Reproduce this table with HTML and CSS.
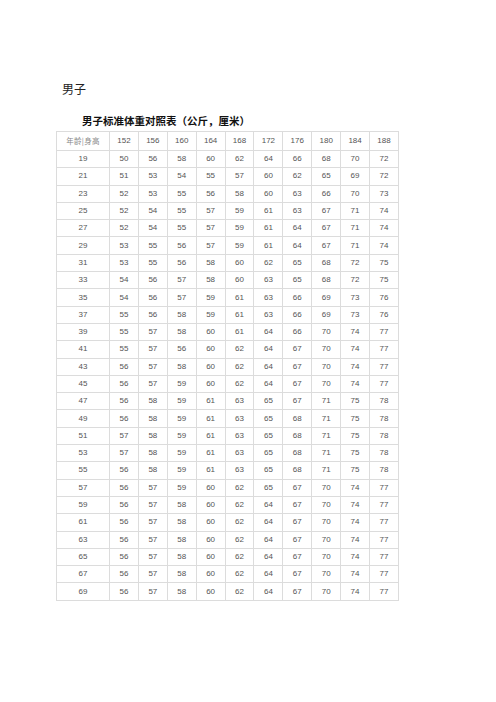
FILE: index.html
```html
<!DOCTYPE html>
<html lang="zh">
<head>
<meta charset="utf-8">
<link rel="stylesheet" href="styles.css">
</head>
<body>
<div class="page">
  <h1 class="heading">男子</h1>
  <h2 class="title">男子标准体重对照表（公斤，厘米）</h2>
  <table class="chart">
    <colgroup><col class="c-first"><col><col><col><col><col><col><col><col><col><col></colgroup>
    <tr class="head"><td class="label">年龄|身高</td><td>152</td><td>156</td><td>160</td><td>164</td><td>168</td><td>172</td><td>176</td><td>180</td><td>184</td><td>188</td></tr>
    <tr><td>19</td><td>50</td><td>56</td><td>58</td><td>60</td><td>62</td><td>64</td><td>66</td><td>68</td><td>70</td><td>72</td></tr>
    <tr><td>21</td><td>51</td><td>53</td><td>54</td><td>55</td><td>57</td><td>60</td><td>62</td><td>65</td><td>69</td><td>72</td></tr>
    <tr><td>23</td><td>52</td><td>53</td><td>55</td><td>56</td><td>58</td><td>60</td><td>63</td><td>66</td><td>70</td><td>73</td></tr>
    <tr><td>25</td><td>52</td><td>54</td><td>55</td><td>57</td><td>59</td><td>61</td><td>63</td><td>67</td><td>71</td><td>74</td></tr>
    <tr><td>27</td><td>52</td><td>54</td><td>55</td><td>57</td><td>59</td><td>61</td><td>64</td><td>67</td><td>71</td><td>74</td></tr>
    <tr><td>29</td><td>53</td><td>55</td><td>56</td><td>57</td><td>59</td><td>61</td><td>64</td><td>67</td><td>71</td><td>74</td></tr>
    <tr><td>31</td><td>53</td><td>55</td><td>56</td><td>58</td><td>60</td><td>62</td><td>65</td><td>68</td><td>72</td><td>75</td></tr>
    <tr><td>33</td><td>54</td><td>56</td><td>57</td><td>58</td><td>60</td><td>63</td><td>65</td><td>68</td><td>72</td><td>75</td></tr>
    <tr><td>35</td><td>54</td><td>56</td><td>57</td><td>59</td><td>61</td><td>63</td><td>66</td><td>69</td><td>73</td><td>76</td></tr>
    <tr><td>37</td><td>55</td><td>56</td><td>58</td><td>59</td><td>61</td><td>63</td><td>66</td><td>69</td><td>73</td><td>76</td></tr>
    <tr><td>39</td><td>55</td><td>57</td><td>58</td><td>60</td><td>61</td><td>64</td><td>66</td><td>70</td><td>74</td><td>77</td></tr>
    <tr><td>41</td><td>55</td><td>57</td><td>56</td><td>60</td><td>62</td><td>64</td><td>67</td><td>70</td><td>74</td><td>77</td></tr>
    <tr><td>43</td><td>56</td><td>57</td><td>58</td><td>60</td><td>62</td><td>64</td><td>67</td><td>70</td><td>74</td><td>77</td></tr>
    <tr><td>45</td><td>56</td><td>57</td><td>59</td><td>60</td><td>62</td><td>64</td><td>67</td><td>70</td><td>74</td><td>77</td></tr>
    <tr><td>47</td><td>56</td><td>58</td><td>59</td><td>61</td><td>63</td><td>65</td><td>67</td><td>71</td><td>75</td><td>78</td></tr>
    <tr><td>49</td><td>56</td><td>58</td><td>59</td><td>61</td><td>63</td><td>65</td><td>68</td><td>71</td><td>75</td><td>78</td></tr>
    <tr><td>51</td><td>57</td><td>58</td><td>59</td><td>61</td><td>63</td><td>65</td><td>68</td><td>71</td><td>75</td><td>78</td></tr>
    <tr><td>53</td><td>57</td><td>58</td><td>59</td><td>61</td><td>63</td><td>65</td><td>68</td><td>71</td><td>75</td><td>78</td></tr>
    <tr><td>55</td><td>56</td><td>58</td><td>59</td><td>61</td><td>63</td><td>65</td><td>68</td><td>71</td><td>75</td><td>78</td></tr>
    <tr><td>57</td><td>56</td><td>57</td><td>59</td><td>60</td><td>62</td><td>65</td><td>67</td><td>70</td><td>74</td><td>77</td></tr>
    <tr><td>59</td><td>56</td><td>57</td><td>58</td><td>60</td><td>62</td><td>64</td><td>67</td><td>70</td><td>74</td><td>77</td></tr>
    <tr><td>61</td><td>56</td><td>57</td><td>58</td><td>60</td><td>62</td><td>64</td><td>67</td><td>70</td><td>74</td><td>77</td></tr>
    <tr><td>63</td><td>56</td><td>57</td><td>58</td><td>60</td><td>62</td><td>64</td><td>67</td><td>70</td><td>74</td><td>77</td></tr>
    <tr><td>65</td><td>56</td><td>57</td><td>58</td><td>60</td><td>62</td><td>64</td><td>67</td><td>70</td><td>74</td><td>77</td></tr>
    <tr><td>67</td><td>56</td><td>57</td><td>58</td><td>60</td><td>62</td><td>64</td><td>67</td><td>70</td><td>74</td><td>77</td></tr>
    <tr><td>69</td><td>56</td><td>57</td><td>58</td><td>60</td><td>62</td><td>64</td><td>67</td><td>70</td><td>74</td><td>77</td></tr>
  </table>
</div>
</body>
</html>
```

FILE: styles.css
```css
html, body {
  margin: 0;
  padding: 0;
  background: #ffffff;
}

.page {
  padding: 82px 0 0 56px;
  font-family: "Liberation Sans", Arial, "Noto Sans CJK SC", sans-serif;
}

.heading {
  margin: 0 0 0 6px;
  font-size: 12px;
  line-height: 14px;
  font-weight: normal;
  color: #222;
  font-family: "Noto Sans CJK SC", sans-serif;
}

.title {
  margin: 18px 0 0 26px;
  font-size: 10.5px;
  line-height: 14px;
  font-weight: bold;
  color: #111;
  font-family: "Noto Sans CJK SC", sans-serif;
}

.chart {
  margin-top: 3px;
  border-collapse: collapse;
  table-layout: fixed;
  width: 343px;
}

.c-first {
  width: 53px;
}

.chart td {
  border: 1px solid #dcdcdc;
  height: 16.3px;
  padding: 0;
  text-align: center;
  vertical-align: middle;
  font-size: 8px;
  line-height: 10px;
  color: #555;
}

.chart .head td {
  height: 18px;
}

.chart .label {
  font-family: "Noto Sans CJK SC", serif;
  font-size: 7.5px;
  letter-spacing: 0.3px;
  color: #8a8a8a;
}
```
